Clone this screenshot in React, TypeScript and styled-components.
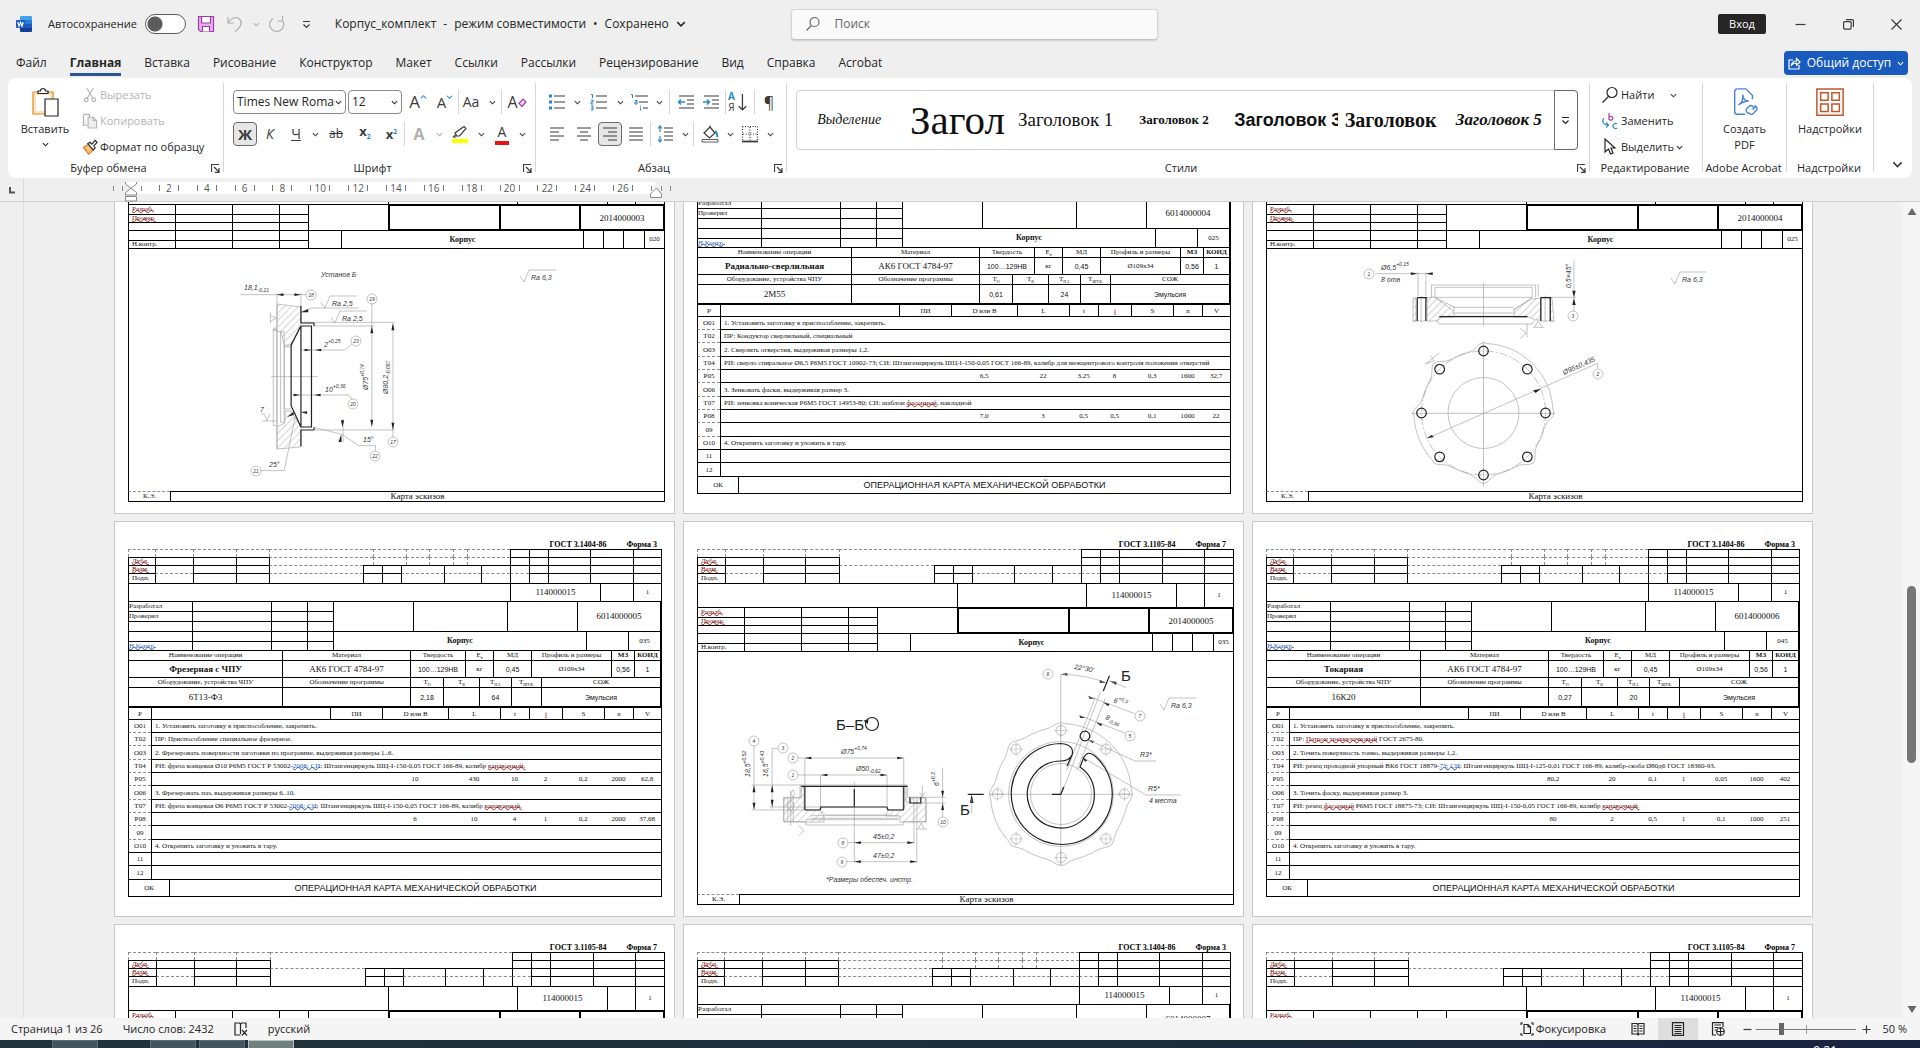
import React from 'react';
import styled, { createGlobalStyle, css } from 'styled-components';

const UI = `"Open Sans", "Noto Sans", sans-serif`;
const SERIF = `"Liberation Serif", "Times New Roman", serif`;
const SANS = `"Liberation Sans", Arial, sans-serif`;

const GlobalStyle = createGlobalStyle`
  * { box-sizing: border-box; }
  body { margin: 0; background: #efefef; }
  button, input, select { font: inherit; color: inherit; }
`;

const Shell = styled.div`
  display: flex;
  flex-direction: column;
  height: 100vh;
  overflow: hidden;
  background: #efefef;
  color: #262626;
  font: 11px/16px ${UI};
`;

/* ---------- title bar ---------- */

const TitleBar = styled.header`
  display: flex;
  align-items: center;
  justify-content: space-between;
  height: 48px;
  flex: none;
  padding-left: 16px;
`;
const TitleSide = styled.div`
  display: flex;
  align-items: center;
  flex: 1 1 0;
`;
const TitleEnd = styled(TitleSide)`
  justify-content: flex-end;
`;
const PlainButton = styled.button<{ $w?: number; $dim?: boolean; $on?: boolean }>`
  display: flex;
  align-items: center;
  justify-content: center;
  flex: none;
  width: ${p => (p.$w ? `${p.$w}px` : 'auto')};
  height: 24px;
  padding: 0;
  border: 1px solid ${p => (p.$on ? '#6b6b6b' : 'transparent')};
  border-radius: 4px;
  background: ${p => (p.$on ? '#e6e6e6' : 'transparent')};
  color: ${p => (p.$dim ? '#b0b0b0' : '#3b3b3b')};
  white-space: nowrap;
`;
const AutoSave = styled.label`
  display: flex;
  align-items: center;
  gap: 8px;
  margin-left: 16px;
  margin-right: 6px;
`;
const Toggle = styled.input`
  appearance: none;
  width: 41px;
  height: 20px;
  margin: 0;
  border: 1px solid #5c5c5c;
  border-radius: 10px;
  background: radial-gradient(circle at 9px 9px, #5c5c5c 7px, #fff 8px);
`;
const DocTitle = styled.button`
  display: flex;
  align-items: center;
  gap: 7px;
  margin-left: 13px;
  padding: 0;
  border: 0;
  background: none;
  font-size: 12px;
  white-space: nowrap;
`;
const SearchBox = styled.label`
  display: flex;
  align-items: center;
  gap: 12px;
  width: 367px;
  height: 31px;
  margin-left: 12px;
  padding-left: 13px;
  border: 1px solid #d6d6d6;
  border-bottom-color: #c2c2c2;
  border-radius: 4px;
  background: #fafafa;
  box-shadow: 0 1px 2px rgba(0, 0, 0, 0.14);
  color: #666;
`;
const SearchInput = styled.input`
  flex: 1;
  min-width: 0;
  border: 0;
  background: none;
  outline: 0;
  font-size: 12px;
  &::placeholder { color: #666; opacity: 1; }
`;
const SignIn = styled.button`
  width: 48px;
  height: 20px;
  margin-right: 10px;
  padding: 0;
  border: 0;
  border-radius: 2px;
  background: #262626;
  color: #fff;
`;

/* ---------- tabs ---------- */

const TabBar = styled.nav`
  display: flex;
  align-items: center;
  justify-content: space-between;
  height: 30px;
  flex: none;
  padding: 0 12px 0 16px;
  font-size: 12px;
`;
const TabList = styled.div`
  display: flex;
  gap: 23px;
`;
const Tab = styled.button<{ $active?: boolean }>`
  height: 26px;
  padding: 2px 0 0;
  border: 0;
  border-bottom: 3px solid ${p => (p.$active ? '#2b579a' : 'transparent')};
  background: none;
  font-weight: ${p => (p.$active ? 700 : 400)};
  line-height: 18px;
`;
const Share = styled.button`
  display: flex;
  align-items: center;
  justify-content: space-between;
  width: 124px;
  height: 24px;
  padding: 0 4px;
  border: 0;
  border-radius: 4px;
  background: #185abd;
  color: #fff;
  white-space: nowrap;
`;

/* ---------- ribbon ---------- */

const Ribbon = styled.section`
  display: flex;
  flex: none;
  height: 100px;
  margin: 0 8px;
  padding: 5px 0 6px;
  border-radius: 8px;
  background: #fff;
`;
const Group = styled.div<{ $w?: number }>`
  display: flex;
  flex-direction: column;
  justify-content: space-between;
  ${p => (p.$w ? css`width: ${p.$w}px; flex: none;` : css`flex: 1; min-width: 0;`)}
  border-right: 1px solid #d6d6d6;
`;
const GroupFoot = styled.div`
  display: flex;
  align-items: center;
  height: 16px;
  margin-bottom: -4px;
  padding-right: 2px;
`;
const GroupName = styled.span`
  flex: 1;
  text-align: center;
  white-space: nowrap;
`;
const Rows = styled.div`
  display: flex;
  flex-direction: column;
  gap: 8px;
  padding: 7px 0 0 9px;
`;
const ToolRow = styled.div`
  display: flex;
  align-items: center;
  height: 24px;
`;
const Rule = styled.span<{ $m?: number }>`
  width: 1px;
  height: 24px;
  margin: 0 ${p => p.$m ?? 0}px;
  background: #d6d6d6;
`;
const Picker = styled.span<{ $w: number }>`
  display: flex;
  align-items: center;
  width: ${p => p.$w}px;
  height: 24px;
  margin-right: 2px;
  padding: 0 3px;
  border: 1px solid #8a8a8a;
  border-radius: 4px;
  select {
    flex: 1;
    min-width: 0;
    padding: 0;
    border: 0;
    appearance: none;
    background: none;
    font-size: 12px;
  }
`;
const Glyph = styled.span<{ $size?: number; $bold?: boolean; $italic?: boolean; $line?: string; $bar?: string }>`
  font-size: ${p => p.$size ?? 15}px;
  line-height: 18px;
  font-weight: ${p => (p.$bold ? 700 : 400)};
  font-style: ${p => (p.$italic ? 'italic' : 'normal')};
  text-decoration: ${p => p.$line ?? 'none'};
  border-bottom: ${p => (p.$bar ? `4px solid ${p.$bar}` : '0')};
  padding: 0 ${p => (p.$bar ? 3 : 0)}px;
  small { font-size: 8px; color: #2b88c8; }
`;
const Clip = styled.div`
  display: flex;
`;
const Stack = styled.div`
  display: flex;
  flex-direction: column;
  align-items: flex-start;
  gap: 2px;
`;
const BigButton = styled.button<{ $w: number }>`
  display: flex;
  flex-direction: column;
  align-items: center;
  gap: 4px;
  width: ${p => p.$w}px;
  padding: 4px 0 0;
  border: 0;
  background: none;
`;
const LineButton = styled.button<{ $dim?: boolean }>`
  display: flex;
  align-items: center;
  gap: 2px;
  height: 24px;
  padding: 0;
  border: 0;
  background: none;
  white-space: nowrap;
  color: ${p => (p.$dim ? '#b5b5b5' : '#262626')};
`;
const Gallery = styled.div`
  display: flex;
  height: 60px;
  margin: 7px 11px 0 9px;
  border: 1px solid #d0d0d0;
  border-radius: 4px;
`;
const StyleItem = styled.button<{ $size: number; $sans?: boolean; $bold?: boolean; $italic?: boolean }>`
  flex: 1 1 0;
  min-width: 0;
  padding: 0 8px 0 4px;
  border: 0;
  background: none;
  overflow: hidden;
  color: #111;
  font-family: ${p => (p.$sans ? SANS : SERIF)};
  font-size: ${p => p.$size}px;
  font-weight: ${p => (p.$bold ? 700 : 400)};
  font-style: ${p => (p.$italic ? 'italic' : 'normal')};
  white-space: nowrap;
`;
const GalleryMore = styled.button`
  display: flex;
  align-items: center;
  justify-content: center;
  width: 24px;
  margin: -1px;
  padding: 0;
  border: 1px solid #6b6b6b;
  border-radius: 0 4px 4px 0;
  background: #fff;
`;
const CollapseSlot = styled.div`
  display: flex;
  align-items: flex-end;
  justify-content: center;
  width: 38px;
  padding-left: 8px;
  margin-bottom: -4px;
`;
const SortText = styled.span`
  display: flex;
  flex-direction: column;
  font-size: 10px;
  line-height: 11px;
  b { color: #2b88c8; }
`;
const EditList = styled(Stack)`
  padding-left: 11px;
`;

/* ---------- ruler ---------- */

const RulerBar = styled.div`
  display: flex;
  flex: none;
  height: 24px;
  border-bottom: 1px solid #d0d0d0;
`;
const TabStop = styled.div`
  display: flex;
  align-items: center;
  justify-content: center;
  width: 24px;
  border-right: 1px solid #dcdcdc;
`;
const Ruler = styled.div`
  display: flex;
  align-items: flex-start;
  padding: 4px 0 0 88px;
  font-size: 10px;
  line-height: 12px;
  color: #555;
`;
const RulerScale = styled.div`
  display: flex;
  justify-content: space-around;
  width: 492px;
  height: 12px;
  background: #fff;
`;
const RulerMark = styled.span`
  display: flex;
  align-items: center;
  justify-content: space-between;
  width: 20px;
  &::before, &::after { content: ''; width: 1px; height: 6px; background: #777; }
`;
const RulerEnd = styled.div<{ $w: number }>`
  display: flex;
  width: ${p => p.$w}px;
  height: 20px;
`;

/* ---------- document ---------- */

const Workspace = styled.main`
  display: flex;
  flex: 1;
  min-height: 0;
`;
const VRuler = styled.div`
  width: 24px;
  border-right: 1px solid #e0e0e0;
`;
const Canvas = styled.div`
  flex: 1;
  display: grid;
  grid-template-columns: repeat(3, 561px);
  grid-template-rows: 312px 396px minmax(0, 1fr);
  column-gap: 8px;
  row-gap: 7px;
  justify-content: center;
  overflow: hidden;
`;
type Edge = 'top' | 'bottom';
const Sheet = styled.article<{ $cut?: Edge; $foot?: number }>`
  display: flex;
  flex-direction: column;
  align-items: flex-start;
  justify-content: ${p => (p.$cut === 'top' ? 'flex-end' : 'flex-start')};
  padding: ${p => (p.$cut === 'top' ? 0 : 17)}px 0 ${p => (p.$cut === 'top' ? p.$foot : 0)}px 13px;
  border: 1px solid #c8c8c8;
  border-top-width: ${p => (p.$cut === 'top' ? 0 : 1)}px;
  border-bottom-width: ${p => (p.$cut === 'bottom' ? 0 : 1)}px;
  background: #fff;
  overflow: hidden;
  color: #111;
  font: 7px/8px ${SERIF};
`;
const Form = styled.div<{ $w: number }>`
  display: flex;
  flex-direction: column;
  flex: none;
  width: ${p => p.$w}px;
`;
const Caption = styled.div<{ $pad: number }>`
  display: flex;
  justify-content: flex-end;
  gap: 20px;
  height: 10px;
  padding-right: ${p => p.$pad}px;
  font-weight: 700;
  font-size: 8px;
  line-height: 12px;
  color: #000;
`;
const Strip = styled.div<{ $h: number; $end?: boolean }>`
  display: flex;
  flex: none;
  height: ${p => p.$h}px;
  border-right: 1px solid #000;
  border-right-width: ${p => (p.$end === false ? 0 : 1)}px;
`;
const edge = (k: string) => (k === 's' ? '1px solid #000' : k === 'd' ? '1px dashed #8c8c8c' : '0');
const Box = styled.div<{ $w?: number; $e: string; $left?: number; $size: number; $bold?: boolean; $sans?: boolean }>`
  display: flex;
  align-items: center;
  justify-content: ${p => (p.$left === undefined ? 'center' : 'flex-start')};
  ${p => (p.$w ? css`width: ${p.$w}px; flex: none;` : css`flex: 1; min-width: 0;`)}
  padding-left: ${p => p.$left ?? 0}px;
  border-top: ${p => edge(p.$e[0])};
  border-left: ${p => edge(p.$e[1])};
  font-family: ${p => (p.$sans ? SANS : SERIF)};
  font-size: ${p => p.$size}px;
  line-height: ${p => p.$size}px;
  font-weight: ${p => (p.$bold ? 700 : 400)};
  white-space: nowrap;
  sub { font-size: 4px; line-height: 4px; align-self: flex-end; }
`;
const HeavyBox = styled.div<{ $w?: number; $last?: boolean }>`
  display: flex;
  align-items: center;
  justify-content: center;
  ${p => (p.$w ? css`width: ${p.$w}px; flex: none;` : css`flex: 1;`)}
  margin-bottom: -1px;
  border: 2px solid #000;
  border-right-width: ${p => (p.$last ? 2 : 0)}px;
  font-size: 9px;
`;
const Halves = styled.div`
  display: flex;
  flex: none;
`;
const Column = styled.div<{ $w?: number }>`
  display: flex;
  flex-direction: column;
  ${p => (p.$w ? css`width: ${p.$w}px; flex: none;` : css`flex: 1; min-width: 0;`)}
`;
const HeavyFrame = styled.div`
  border-right: 1px solid #000;
  border-bottom: 1px solid #000;
`;
const Flag = styled.span<{ $c?: string }>`
  text-decoration: underline wavy ${p => p.$c ?? '#d21a1a'} 1px;
  text-decoration-skip-ink: none;
  text-underline-offset: -2px;
  color: ${p => p.$c ?? '#5c1414'};
`;
const OpsTable = styled.table`
  width: 534px;
  table-layout: fixed;
  border-collapse: separate;
  border-spacing: 0;
  border-right: 1px solid #000;
  th, td {
    height: 13px;
    padding: 0;
    border-top: 1px solid #000;
    font-weight: 400;
    font-size: 7px;
    line-height: 8px;
    text-align: center;
    white-space: nowrap;
  }
  thead th { height: 12px; border-left: 1px solid #000; }
  tbody th { border-left: 1px solid #000; }
`;
const OpRow = styled.tr<{ $tall?: boolean; $dash?: boolean }>`
  th, td { height: ${p => (p.$tall ? 14 : 13)}px; }
  tbody & th { border-top: ${p => (p.$dash ? '1px dashed #8c8c8c' : '1px solid #000')}; }
  td:nth-child(2) { border-left: 1px solid #000; }
`;
const Step = styled.td`
  && { padding-left: 3px; text-align: left; }
`;
const DrawingArea = styled.div`
  height: 243px;
  border: 1px solid #000;
  border-bottom: 0;
`;
const Bottom = styled.div`
  display: flex;
  border-right: 1px solid #000;
  border-bottom: 1px solid #000;
`;

type Spec = { w?: number; e?: string; t?: React.ReactNode; left?: number; size?: number; bold?: boolean; sans?: boolean };
function Line({ h, cells, end }: { h: number; cells: Spec[]; end?: boolean }) {
  return (
    <Strip $h={h} $end={end}>
      {cells.map((c, i) => (
        <Box key={i} $w={c.w} $e={c.e ?? 'ss'} $left={c.left} $size={c.size ?? 7} $bold={c.bold} $sans={c.sans}>
          {c.t}
        </Box>
      ))}
    </Strip>
  );
}
const run = (e: string, ...ws: number[]): Spec[] => ws.map(w => (w ? { w, e } : { e }));

function OpHead() {
  return (
    <>
      <Line h={8} cells={[...run('dd', 27, 38, 43, 33, 104, 33, 23, 24, 14, 43), ...run('ss', 19, 19, 42, 43, 0)]} />
      <Line h={8} cells={[{ w: 27, t: <Flag>Дубл.</Flag>, left: 3 }, ...run('ss', 38, 43, 33), { w: 104, e: 'ds' }, ...run('dd', 33, 23, 24, 14, 43), ...run('ss', 19, 19, 42, 43, 0)]} />
      <Line h={8} cells={[{ w: 27, t: <Flag>Взам.</Flag>, left: 3 }, ...run('ss', 38, 43, 33), { w: 94, e: 'ds' }, ...run('ss', 19, 19, 43, 37, 29, 19, 19, 42, 43, 0)]} />
      <Line h={10} cells={[{ w: 27, t: 'Подп.', left: 3 }, { w: 38, e: 'ds' }, ...run('ss', 43, 33), { w: 94, e: 'ds' }, ...run('ss', 19, 19), ...run('ds', 43, 37, 29, 19), ...run('ss', 19, 42, 43, 0)]} />
      <Line h={18} cells={[{ w: 382 }, { w: 90, t: '114000015', size: 9 }, { w: 33 }, { t: '1' }]} />
    </>
  );
}
function SketchHead() {
  return (
    <>
      <Line h={8} cells={[...run('dd', 28, 38, 42, 34), { w: 242, e: 'dd' }, ...run('ss', 19, 19, 43, 42, 0)]} />
      <Line h={8} cells={[{ w: 28, t: <Flag>Дубл.</Flag>, left: 3 }, ...run('ss', 38, 42, 34), { w: 242, e: 'ns' }, ...run('ss', 19, 19, 43, 42, 0)]} />
      <Line h={8} cells={[{ w: 28, t: <Flag>Взам.</Flag>, left: 3 }, ...run('ss', 38, 42, 34), { w: 95, e: 'ds' }, ...run('ss', 19, 19, 42, 38, 29, 19, 19, 43, 42, 0)]} />
      <Line h={10} cells={[{ w: 28, t: 'Подп.', left: 3 }, { w: 38, e: 'ds' }, ...run('ss', 42, 34), { w: 95, e: 'ns' }, ...run('ss', 19, 19), ...run('ds', 42, 38, 29, 19), ...run('ss', 19, 43, 42, 0)]} />
    </>
  );
}

type Op = {
  no: string; page?: string; name?: string; machine?: string; t0?: string; tp?: string;
  steps?: React.ReactNode[]; m1?: string[]; m2?: string[]; cut?: Edge;
};
const rowIds = ['О01', 'Т02', 'О03', 'Т04', 'Р05', 'О06', 'Т07', 'Р08', '09', 'О10', '11', '12'];
const widths = [23, 179, 52, 66, 52, 29, 33, 42, 29, 28];

function OperationCard({ no, page, name, machine, t0, tp, steps = [], m1 = [], m2 = [], cut }: Op) {
  const full = cut !== 'bottom';
  return (
    <Sheet $cut={cut} $foot={19}>
      <Form $w={534}>
        {cut !== 'top' && <><Caption $pad={5}><span>ГОСТ 3.1404-86</span><span>Форма 3</span></Caption><OpHead /></>}
        <HeavyFrame>
          <Halves>
            <Column $w={205}>
              {['Разработал', full && 'Проверил', '', '', full && <Flag $c="#2a5fb4" key="n">Н.Контр.</Flag>].map((t, i) => (
                <Line key={i} h={i === 4 ? 9 : 10} end={false} cells={[{ w: 64, t, left: 0 }, { w: 79 }, { w: 36 }, { w: 26 }]} />
              ))}
            </Column>
            <Column>
              <Line h={30} cells={[{ w: 80 }, { w: 94 }, { w: 70 }, { t: no, size: 9 }]} />
              <Line h={19} cells={[{ w: 253, t: full && 'Корпус', size: 8, bold: true }, { w: 42 }, { t: page }]} />
            </Column>
          </Halves>
          {full && (
            <>
              <Line h={10} cells={[{ w: 154, t: 'Наименование операции' }, { w: 128, t: 'Материал' }, { w: 55, t: 'Твердость' }, { w: 28, t: <>Е<sub>в</sub></> }, { w: 38, t: 'МД' }, { w: 80, t: 'Профиль и размеры' }, { w: 23, t: 'МЗ', bold: true }, { t: 'КОИД', bold: true }]} />
              <Line h={17} cells={[{ w: 154, t: name, size: 9, bold: true }, { w: 128, t: 'АК6 ГОСТ 4784-97', size: 9 }, { w: 55, t: '100…129НВ', sans: true }, { w: 28, t: 'кг' }, { w: 38, t: '0,45', sans: true }, { w: 80, t: 'Ø109x34' }, { w: 23, t: '0,56', sans: true }, { t: '1', sans: true }]} />
              <Line h={10} cells={[{ w: 154, t: 'Оборудование, устройства ЧПУ' }, { w: 128, t: 'Обозначение программы' }, { w: 33, t: <>Т<sub>О</sub></> }, { w: 36, t: <>Т<sub>В</sub></> }, { w: 32, t: <>Т<sub>П.З.</sub></> }, { w: 30, t: <>Т<sub>ШТ.К.</sub></> }, { t: 'СОЖ' }]} />
              <Line h={19} cells={[{ w: 154, t: machine, size: 9 }, { w: 128 }, { w: 33, t: t0, sans: true }, { w: 36 }, { w: 32, t: tp, sans: true }, { w: 30 }, { t: 'Эмульсия', sans: true }]} />
            </>
          )}
        </HeavyFrame>
        {full && (
          <>
            <OpsTable>
              <colgroup>{widths.map((w, i) => <col key={i} width={w} />)}</colgroup>
              <thead>
                <tr>
                  {['Р', '', 'ПИ', 'D или В', 'L', 't', 'i', 'S', 'n', 'V'].map((t, i) => (
                    <th key={i} scope="col">{t === 'i' ? <Flag>i</Flag> : t}</th>
                  ))}
                </tr>
              </thead>
              <tbody>
                {rowIds.map((id, i) => {
                  const m = id === 'Р05' ? m1 : id === 'Р08' ? m2 : null;
                  return (
                    <OpRow key={id} $tall={i % 3 === 2} $dash={i > 0 && i < 10}>
                      <th scope="row">{id}</th>
                      {m ? <><td colSpan={2} />{m.map((v, k) => <td key={k}>{v}</td>)}</> : <Step colSpan={9}>{steps[i]}</Step>}
                    </OpRow>
                  );
                })}
              </tbody>
            </OpsTable>
            <Bottom>
              <Line h={17} end={false} cells={[{ w: 41, t: 'ОК' }, { w: 492, t: 'ОПЕРАЦИОННАЯ КАРТА МЕХАНИЧЕСКОЙ ОБРАБОТКИ', size: 9, sans: true }]} />
            </Bottom>
          </>
        )}
      </Form>
    </Sheet>
  );
}

function SketchCard({ no, page, cut, children }: { no?: string; page?: string; cut?: Edge; children?: React.ReactNode }) {
  const full = cut !== 'bottom';
  return (
    <Sheet $cut={cut} $foot={11}>
      <Form $w={537}>
        {cut !== 'top' && <><Caption $pad={8}><span>ГОСТ 3.1105-84</span><span>Форма 7</span></Caption><SketchHead /></>}
        <Line h={24} cells={[{ w: 260 }, { w: 129 }, { w: 90, t: cut !== 'top' && '114000015', size: 9 }, { w: 28 }, { t: cut !== 'top' && '1' }]} />
        <Halves>
          <Column $w={180}>
            {[<Flag key="a">Разраб.</Flag>, full && <Flag key="b">Провер.</Flag>, '', '', full && 'Н.контр.'].map((t, i) => (
              <Line key={i} h={[10, 8, 8, 10, 8][i]} end={false} cells={[{ w: 47, t, left: 3 }, { w: 57 }, { w: 47 }, { w: 29 }]} />
            ))}
          </Column>
          <Column>
            <Strip $h={26} $end={false}>
              <Box $w={80} $e="ss" $size={7} />
              <HeavyBox $w={111} />
              <HeavyBox $w={80} />
              <HeavyBox $last>{no}</HeavyBox>
            </Strip>
            <Line h={18} cells={[{ w: 33 }, { w: 242, t: full && 'Корпус', size: 8, bold: true }, { w: 20 }, { w: 20 }, { w: 21 }, { t: page }]} />
          </Column>
        </Halves>
        {full && (
          <>
            <DrawingArea>{children}</DrawingArea>
            <Bottom>
              <Line h={10} end={false} cells={[{ w: 42, t: 'К.Э.', e: 'ds' }, { w: 494, t: 'Карта эскизов', size: 9 }]} />
            </Bottom>
          </>
        )}
      </Form>
    </Sheet>
  );
}

/* ---------- engineering drawings ---------- */

const Drawing = styled.svg`
  display: block;
  width: 100%;
  height: 100%;
  fill: none;
  stroke: #9a9a9a;
  stroke-width: 0.6;
  text { fill: #333; stroke: none; font: italic 7px ${SANS}; }
  .s { font-size: 5px; }
  .v { font: 15px ${SANS}; fill: #222; }
  .k { stroke: #222; stroke-width: 1.2; }
  .f { fill: #222; stroke: none; }
  path, line { vector-effect: non-scaling-stroke; }
`;
function Ball({ x, y, n }: { x: number; y: number; n: string }) {
  return (
    <g>
      <circle cx={x} cy={y} r="5" />
      <text x={x} y={y + 2} textAnchor="middle" className="s">{n}</text>
    </g>
  );
}
function Note({ x, y, a = 0, t, up, dn }: { x: number; y: number; a?: number; t: string; up?: string; dn?: string }) {
  return (
    <text transform={`translate(${x} ${y}) rotate(${a})`}>
      {t}
      {up && <tspan className="s" dy="-4">{up}</tspan>}
      {dn && <tspan className="s" dy="2">{dn}</tspan>}
    </text>
  );
}
function Rough({ x, y, t }: { x: number; y: number; t: string }) {
  return (
    <g>
      <path d={`M${x - 11} ${y - 4}l4 6l5 -12h27`} />
      <Note x={x} y={y} t={t} />
    </g>
  );
}
function flange(cx: number, cy: number, r: number, bump: number) {
  const pts: string[] = [];
  for (let a = 0; a < 360; a += 3) {
    const d = Math.abs(((a + 22.5) % 45) - 22.5);
    const wide = a > 270 || (a > 135 && a < 180);
    const rr = wide ? bump - 1 : r + (bump - r) * Math.exp(-((d / 7) ** 2));
    const t = (a * Math.PI) / 180;
    pts.push(`${(cx + rr * Math.cos(t)).toFixed(1)} ${(cy + rr * Math.sin(t)).toFixed(1)}`);
  }
  return `M${pts.join('L')}Z`;
}
const holes = (cx: number, cy: number, r: number) =>
  Array.from({ length: 8 }, (_, i) => [cx + r * Math.cos((i * Math.PI) / 4), cy + r * Math.sin((i * Math.PI) / 4)]);

function Hatch({ id }: { id: string }) {
  return (
    <defs>
      <pattern id={id} width="5" height="5" patternUnits="userSpaceOnUse" patternTransform="rotate(45)">
        <path d="M0 0V5" strokeWidth="0.8" />
      </pattern>
    </defs>
  );
}

function SketchBore() {
  return (
    <Drawing aria-label="Эскиз 020">
      <Hatch id="h1" />
      <path fill="url(#h1)" d="M148 55L172 58V74L162 98V98H156L152 83L144 81L148 77ZM148 178L156 174V162H162L172 178V198L148 200Z" />
      <g transform="scale(.3635 .3333) translate(-51 -160)">
        <path d="M357 297H538M458 292V760M524 292V330M524 380H782M560 391H725M719 322V690M777 385V726M560 703H782M524 463H645L664 446M500 598H655L665 612M448 400V690H458V400ZM468 408V680H478V408ZM478 448H497M478 448V640H497M442 543H570M560 695L636 716L683 750H729V766M640 670V740M412 825H478L508 665M440 350V384M440 360L457 368L440 376M415 655H424L430 676L438 655M418 676H458M524 350L555 337H683" />
        <path className="k" d="M524 330V382H560M524 391H553V694H524M560 703H524V752M524 391L497 448V630L524 694M524 391V694M560 382V391M560 695V703" />
        <path className="f" d="M458 297l18 -4v8zM524 297l-18 -4v8zM719 391l-4 22h8zM719 694l-4 -22h8zM777 382l-4 22h8zM777 703l-4 -22h8zM552 463l-18 -4v8zM562 463l18 -4v8zM522 598l-18 -4v8zM560 598l18 -4v8zM524 350l20 -10v10zM638 694l-4 -20h9zM635 716l-8 24l9 -2zM486 664l18 -16v10zM523 649l18 -2v8z" />
      </g>
      <Note x={192} y={28} t="Установ Б" />
      <Note x={115} y={41} t="18,1" dn="-0,21" />
      <Rough x={203} y={57} t="Ra 2,5" />
      <Rough x={213} y={72} t="Ra 2,5" />
      <Rough x={402} y={31} t="Ra 6,3" />
      <Note x={195} y={98} t="2" up="+0,25" />
      <Note x={196} y={143} t="10" up="+0,36" />
      <Note x={239} y={141} a={-90} t="Ø75" up="+0,74" />
      <Note x={259} y={145} a={-90} t="Ø80,2" dn="-0,087" />
      <Note x={234} y={193} t="15°" />
      <Note x={140} y={218} t="25°" />
      <Note x={131} y={163} t="7" />
      <Ball x={182} y={46} n="18" />
      <Ball x={243} y={50} n="19" />
      <Ball x={227} y={92} n="23" />
      <Ball x={224} y={155} n="20" />
      <Ball x={264} y={193} n="17" />
      <Ball x={246} y={207} n="22" />
      <Ball x={127} y={222} n="21" />
    </Drawing>
  );
}

function SketchHoles() {
  return (
    <Drawing aria-label="Эскиз 025">
      <Hatch id="h2" />
      <path fill="url(#h2)" d="M167 48L187 58V68H175L170 72H160V49ZM265 50L247 60V68H262L268 71H274V49ZM149 49H146V72H149ZM283 49H285L287 72H283Z" />
      <g transform="scale(.4305 .3333) translate(-50 -160)">
        <path d="M302 234H432M401 230V300M419 230V300M432 305V268H674V305M440 305V275H666V305H440L482 345M666 305L622 345M482 335H622M482 352H622M445 375H445L450 385H666L670 375M450 362H655M553 262V392M763 195V346M684 305H768M680 265V300M408 300V380M696 300V380M654 385V425M638 398L652 412L638 430M668 395H694M672 393L680 377L688 393M388 376H420M686 376H718M553 438V872M385 653H720M422 728L818 503V518M418 505L450 472M418 505L438 495L430 480" />
        <path className="k" d="M399 306V376M419 306V376M399 306H422M686 306V376M708 306V376M686 306H710M450 363H655" />
        <path className="f" d="M400 234l-16 -4v8zM419 234l16 -4v8zM763 305l-4 -20h8zM763 308l-4 20h8zM422 728l10 -10l6 6zM686 580l-18 4l6 8z" />
      </g>
      <path d={flange(216.5, 164, 62.5, 70.5)} />
      <circle cx="216.5" cy="164" r="62" strokeDasharray="8 2 2 2" />
      <circle cx="216.5" cy="164" r="35.5" />
      {holes(216.5, 164, 62).map(([x, y], i) => <circle key={i} cx={x} cy={y} r="4.8" className="k" strokeWidth="1.8" />)}
      <Note x={114} y={21} t="Ø6,5" up="+0,15" />
      <Note x={114} y={33} t="8 отв" />
      <Note x={304} y={39} a={-90} t="0,5×45°" />
      <Rough x={415} y={33} t="Ra 6,3" />
      <Note x={297} y={126} a={-24} t="Ø95±0,435" />
      <Ball x={102} y={25} n="1" />
      <Ball x={306} y={67} n="3" />
      <Ball x={331} y={125} n="2" />
    </Drawing>
  );
}

function SketchSlot() {
  const cx = 363, cy = 142;
  return (
    <Drawing aria-label="Эскиз 035">
      <Hatch id="h3" />
      <path fill="url(#h3)" d="M86 146H102V134H106V158H122L126 164V170H86ZM208 134H205V158H190L188 164H202V170H228V146H212V150H208Z" />
      <g transform="scale(.3635 .3333) translate(-48 -409)">
        <path d="M202 690V880M252 880V698H266M324 727H614M324 778H568M342 727V810M614 727V810M385 778V872M568 778V872M195 808H624V845H675V918H612V928H345V918H283V845H332V808M195 883H342M245 874H478M358 900H600M358 908H600M385 883L400 898H568M721 756V904M630 845H728M630 862H728M462 981H642M456 1038H650M642 845V985M650 845V1042M478 800V1042M325 960L340 945L325 930M648 940H678M655 938L662 922L670 938M295 845V918M310 845V918M303 825V930M303 852L293 870L303 890L313 870ZM345 912H600M665 810V842M658 830L665 843L672 830M309 823L303 833L309 845L315 833Z" />
        <path className="k" d="M342 812V880Q342 883 346 883H380Q386 883 386 874H568Q568 883 574 883H610Q614 883 614 880V812M332 812H624M631 845V862H661V845M478 820V872" strokeWidth="1" />
        <path className="f" d="M342 727l18 -4v8zM614 727l-18 -4v8zM386 778l18 -4v8zM568 778l-18 -4v8zM202 808l-4 22h8zM202 883l-4 -22h8zM252 808l-4 22h8zM252 874l-4 -22h8zM478 981l18 -4v8zM642 981l-18 -4v8zM478 1038l18 -4v8zM650 1038l-18 -4v8zM721 845l-4 -20h8zM721 863l-4 20h8zM503 615l12 10l2 -14zM1046 476l18 -4v8zM1170 501l-18 0l3 -8zM1180 495l20 4l-2 9zM1140 549l-18 -8l3 8zM1162 560l18 4l-3 8zM1115 607l-18 -8l3 8zM1142 620l18 4l-3 8zM1121 672l16 4l-3 7zM1105 724l14 10l-6 4zM801 836l-5 26h10z" />
        <path d="M1046 476V1050M850 836H1245M1046 476Q1110 476 1170 501M1180 495L1226 516M1120 541L1250 594M1097 599L1224 653M1121 672L1250 736H1308M1105 724L1280 838H1376M1155 530L1050 830M1141 545L1062 765M1168 550L1090 765M801 850V894" />
        <path className="k" d="M1180 480L1163 526M790 836H834M1022 836H1046L1054 814" strokeWidth="1.8" />
      </g>
      <path d={flange(cx, cy, 66.5, 71.5)} />
      <circle cx={cx} cy={cy} r="52.5" />
      <circle cx={cx} cy={cy} r="30.5" />
      <path className="k" d="M397 104A50.500 50.500 0 1 1 363 91.500Q377 93 374 103Q371 109 363 109A33.500 33.500 0 1 0 382 115L386 105Q390 98 397 104M374 103L369 114" />
      <circle cx="387" cy="84" r="4.800" className="k" />
      {holes(cx, cy, 63.5).map(([x, y], i) => (
        <g key={i}>
          <circle cx={x} cy={y} r="5" />
          <path d={`M${x - 7} ${y}h14M${x} ${y - 7}v14`} strokeWidth="0.4" />
        </g>
      ))}
      <circle cx="174" cy="72" r="6.500" className="k" />
      <text x="138" y="78" className="v">Б–Б</text>
      <text x="423" y="29" className="v">Б</text>
      <text x="262" y="163" className="v">Б</text>
      <Note x={143} y={102} t="Ø75" up="+0,74" />
      <Note x={158} y={119} t="Ø50" dn="-0,62" />
      <Note x={52} y={125} a={-90} t="18,5" up="+0,52" />
      <Note x={70} y={125} a={-90} t="16,5" up="+0,43" />
      <Note x={241} y={134} a={-90} t="6" up="+0,3" />
      <Note x={175} y={187} t="45±0,2" />
      <Note x={175} y={206} t="47±0,2" />
      <Note x={128} y={230} t="*Размеры обеспеч. инстр." />
      <Note x={376} y={17} a={10} t="22°30'" />
      <Note x={415} y={50} a={22} t="6" up="+0,3" />
      <Note x={407} y={67} a={22} t="8" dn="-0,36" />
      <Rough x={473} y={56} t="Ra 6,3" />
      <Note x={442} y={105} t="R3*" />
      <Note x={450} y={139} t="R5*" />
      <Note x={451} y={151} t="4 места" />
      <Ball x={56} y={89} n="4" />
      <Ball x={85} y={96} n="3" />
      <Ball x={95} y={106} n="2" />
      <Ball x={95} y={123} n="1" />
      <Ball x={245} y={170} n="10" />
      <Ball x={145} y={191} n="8" />
      <Ball x={144} y={210} n="9" />
      <Ball x={350} y={22} n="6" />
      <Ball x={442} y={64} n="7" />
      <Ball x={432} y={84} n="5" />
    </Drawing>
  );
}

/* ---------- scroll bar, status bar, taskbar ---------- */

const ScrollBar = styled.div`
  display: flex;
  flex-direction: column;
  align-items: center;
  width: 17px;
  padding: 5px 0 4px;
  background: #f5f5f5;
`;
const ScrollTrack = styled.div`
  flex: 1;
  display: grid;
  grid-template-rows: 365fr 175fr 238fr;
`;
const ScrollThumb = styled.div`
  grid-row: 2;
  width: 9px;
  border-radius: 5px;
  background: #767676;
`;
const StatusBar = styled.footer`
  display: flex;
  align-items: center;
  justify-content: space-between;
  flex: none;
  height: 22px;
  padding: 0 13px 0 11px;
  background: #f5f5f5;
`;
const StatusSide = styled.div<{ $gap: number }>`
  display: flex;
  align-items: center;
  gap: ${p => p.$gap}px;
`;
const ViewButton = styled.button<{ $on?: boolean }>`
  display: flex;
  align-items: center;
  justify-content: center;
  width: 40px;
  height: 22px;
  padding: 0;
  border: 0;
  background: ${p => (p.$on ? '#dedede' : 'none')};
`;
const Focus = styled.button`
  display: flex;
  align-items: center;
  gap: 2px;
  margin-right: 12px;
  padding: 0;
  border: 0;
  background: none;
`;
const Zoom = styled.input`
  width: 100px;
  height: 16px;
  margin: 0;
  appearance: none;
  background: linear-gradient(#777, #777) 0 8px / 100% 1px no-repeat, linear-gradient(#999, #999) 50px 4px / 1px 9px no-repeat;
  &::-webkit-slider-thumb {
    appearance: none;
    width: 5px;
    height: 12px;
    background: #666;
  }
`;
const ZoomValue = styled.span`
  width: 31px;
  text-align: right;
  white-space: nowrap;
`;
const TaskBar = styled.div`
  display: flex;
  justify-content: space-between;
  flex: none;
  height: 8px;
  padding: 0 83px 0 52px;
  overflow: hidden;
  background: linear-gradient(90deg, #22333b, #1c2c3a 60%, #1a2342);
`;
const TaskGroup = styled.div`
  display: flex;
  gap: 3px;
`;
const Task = styled.span<{ $on?: boolean; $gap?: boolean }>`
  width: 46px;
  height: 8px;
  margin-right: ${p => (p.$gap ? 49 : 0)}px;
  border: 1px solid ${p => (p.$on ? '#b9c2c2' : '#5d6d74')};
  border-bottom: 0;
  background: ${p => (p.$on ? '#71807f' : '#43545c')};
`;
const Clock = styled.time`
  padding-top: 3px;
  color: #fff;
  font-size: 12px;
  line-height: 16px;
`;

/* ---------- icons ---------- */

const Ico = styled.svg<{ $s?: number; $raised?: boolean }>`
  width: ${p => p.$s ?? 18}px;
  height: ${p => p.$s ?? 18}px;
  margin-bottom: ${p => (p.$raised ? 10 : 0)}px;
  flex: none;
  fill: none;
  stroke: currentColor;
  stroke-width: 1.2;
  .b { stroke: #2b88c8; }
`;
const Chev = ({ s = 7 }: { s?: number }) => <Ico $s={s} viewBox="0 0 8 8"><path d="M1 2.500L4 5.500L7 2.500" /></Ico>;
const Launcher = () => (
  <PlainButton $w={12} aria-label="Параметры группы">
    <Ico $s={9} viewBox="0 0 9 9"><path d="M.5 8V.5H8M3 3L8 8M8 4V8.300H4" /></Ico>
  </PlainButton>
);
const Drop = ({ w, dim }: { w: number; dim?: boolean }) => <PlainButton $w={w} $dim={dim} aria-label="Ещё"><Chev /></PlainButton>;
function Lines({ xs }: { xs: [number, number][] }) {
  return <Ico viewBox="0 0 18 18"><path d={xs.map(([a, b], i) => `M${a} ${3 + i * 4}H${b}`).join('')} /></Ico>;
}

const tabs = ['Файл', 'Главная', 'Вставка', 'Рисование', 'Конструктор', 'Макет', 'Ссылки', 'Рассылки', 'Рецензирование', 'Вид', 'Справка', 'Acrobat'];

function Header() {
  return (
    <>
      <TitleBar>
        <TitleSide>
          <Ico $s={16} viewBox="0 0 16 16">
            <path fill="#41a5ee" stroke="none" d="M5 0h10a1 1 0 0 1 1 1v3H4V1a1 1 0 0 1 1-1z" />
            <path fill="#2b7cd3" stroke="none" d="M4 4h12v4H4z" />
            <path fill="#185abd" stroke="none" d="M4 8h12v4H4z" />
            <path fill="#103f91" stroke="none" d="M4 12h12v3a1 1 0 0 1-1 1H5a1 1 0 0 1-1-1z" />
            <rect fill="#185abd" stroke="none" y="4" width="9" height="8" rx="1" />
            <path stroke="#fff" d="M1.800 6L3 10.200L4.500 6.200L6 10.200L7.200 6" />
          </Ico>
          <AutoSave>Автосохранение<Toggle type="checkbox" /></AutoSave>
          <PlainButton $w={28} aria-label="Сохранить">
            <Ico viewBox="0 0 18 18"><path fill="#e3b3e8" stroke="#a33bb0" d="M1.500 1.500H16.500V16.500H3.500L1.500 14.500Z" /><path fill="#fff" stroke="#a33bb0" d="M4.500 1.500H13.500V8H4.500ZM5.500 16.500V11.500H12.500V16.500" /></Ico>
          </PlainButton>
          <PlainButton $w={30} $dim aria-label="Отменить"><Ico viewBox="0 0 18 18"><path d="M2 2V8H8M2 8C5 3 10 1 13.500 4C17 8 15 12 9 16.500" /></Ico></PlainButton>
          <Drop w={14} dim />
          <PlainButton $w={28} $dim aria-label="Повторить"><Ico viewBox="0 0 18 18"><path d="M13.500 1V6H8.500M4 3.500A7 7 0 1 0 13.500 5.500" /></Ico></PlainButton>
          <PlainButton $w={30} aria-label="Настройка панели"><Ico $s={9} viewBox="0 0 9 9"><path d="M1 1.500H8M1.500 4.500L4.500 7.500L7.500 4.500" /></Ico></PlainButton>
          <DocTitle><span>Корпус_комплект</span><span>-</span><span>режим совместимости</span><span>•</span><span>Сохранено</span><Chev s={10} /></DocTitle>
        </TitleSide>
        <SearchBox>
          <Ico $s={16} viewBox="0 0 16 16"><circle cx="9.500" cy="6" r="4.500" /><path d="M6.300 9.500L1.500 14.500" /></Ico>
          <SearchInput placeholder="Поиск" aria-label="Поиск" />
        </SearchBox>
        <TitleEnd>
          <SignIn>Вход</SignIn>
          <PlainButton $w={48} aria-label="Свернуть"><Ico $s={11} viewBox="0 0 11 11"><path d="M.5 5.500H10.500" /></Ico></PlainButton>
          <PlainButton $w={48} aria-label="Восстановить"><Ico $s={11} viewBox="0 0 11 11"><rect x=".6" y="2.600" width="7.500" height="7.500" rx="1" /><path d="M3 .6H9A1.400 1.400 0 0 1 10.400 2V8" /></Ico></PlainButton>
          <PlainButton $w={48} aria-label="Закрыть"><Ico $s={11} viewBox="0 0 11 11"><path d="M.5 .5L10.500 10.500M10.500 .5L.5 10.500" /></Ico></PlainButton>
        </TitleEnd>
      </TitleBar>
      <TabBar>
        <TabList>{tabs.map(t => <Tab key={t} $active={t === 'Главная'}>{t}</Tab>)}</TabList>
        <Share>
          <Ico $s={13} viewBox="0 0 13 13"><path d="M5 3H1V12H11V8M3.500 8C4 5 6 4 8.500 4V1.500L12 5L8.500 8.300V6C6.500 6 5 6.500 3.500 8Z" /></Ico>
          Общий доступ
          <Chev />
        </Share>
      </TabBar>
    </>
  );
}

function RibbonBar() {
  return (
    <Ribbon>
      <Group $w={216}>
        <Clip>
          <BigButton $w={74}>
            <Ico $s={30} viewBox="0 0 30 30"><path stroke="#e08a1e" fill="#fbe3bf" d="M3 5H23V27H3Z" /><path fill="#fff" stroke="none" d="M6 8H20V24H6Z" /><path fill="#fff" d="M8 6.500V4H10.500A2.500 2.500 0 0 1 15.500 4H18V6.500ZM15 12H28V29H15Z" /></Ico>
            Вставить
            <Chev />
          </BigButton>
          <Stack>
            <LineButton $dim><Ico $s={16} viewBox="0 0 17 17"><path d="M5 1L11.500 12M12 1L5.500 12" /><circle cx="4.500" cy="13.500" r="2" /><circle cx="12.500" cy="13.500" r="2" /></Ico>Вырезать</LineButton>
            <LineButton $dim><Ico $s={16} viewBox="0 0 17 17"><path fill="#eee" d="M1.500 1.500H8V4M1.500 1.500V13H6M6.500 4.500H12L15.500 8V16H6.500ZM12 4.500V8H15.500" /></Ico>Копировать</LineButton>
            <LineButton><Ico $s={16} viewBox="0 0 17 17"><path fill="#f7c27d" stroke="#dd7a1a" d="M1.500 9L7 5.500L12 11.500L7 16Z" /><path fill="#fff" d="M6 5L8.500 3.500L10.500 5.500L14 1.500L16 3.500L12.500 7.500L14 9.500L12 11.500Z" /></Ico>Формат по образцу</LineButton>
          </Stack>
        </Clip>
        <GroupFoot><GroupName>Буфер обмена</GroupName><Launcher /></GroupFoot>
      </Group>

      <Group $w={312}>
        <Rows>
          <ToolRow>
            <Picker $w={113}><select aria-label="Шрифт" defaultValue="t"><option value="t">Times New Roman</option></select><Chev /></Picker>
            <Picker $w={54}><select aria-label="Размер" defaultValue="12"><option>12</option></select><Chev /></Picker>
            <PlainButton $w={28}><Glyph $size={17}>A</Glyph><Ico $raised $s={7} viewBox="0 0 8 8"><path className="b" d="M1 5L4 2L7 5" /></Ico></PlainButton>
            <PlainButton $w={26}><Glyph>A</Glyph><Ico $raised $s={7} viewBox="0 0 8 8"><path className="b" d="M1 2L4 5L7 2" /></Ico></PlainButton>
            <Rule />
            <PlainButton $w={24}><Glyph $size={14}>Aa</Glyph></PlainButton><Drop w={18} />
            <Rule />
            <PlainButton $w={30} aria-label="Очистить формат"><Glyph $size={16}>A</Glyph><Ico $s={9} viewBox="0 0 9 9"><path stroke="#a33bb0" fill="#f3d9f6" d="M1 5.500L5 1L8 4L4 8.500Z" /></Ico></PlainButton>
          </ToolRow>
          <ToolRow>
            <PlainButton $w={24} $on><Glyph $bold>Ж</Glyph></PlainButton>
            <PlainButton $w={26}><Glyph $italic $size={14}>К</Glyph></PlainButton>
            <PlainButton $w={26}><Glyph $line="underline" $size={14}>Ч</Glyph></PlainButton><Drop w={12} />
            <PlainButton $w={30}><Glyph $line="line-through" $size={12}>ab</Glyph></PlainButton>
            <PlainButton $w={28}><Glyph $bold $size={13}>x<small><sub>2</sub></small></Glyph></PlainButton>
            <PlainButton $w={25}><Glyph $bold $size={13}>x<small><sup>2</sup></small></Glyph></PlainButton>
            <Rule />
            <PlainButton $w={28} $dim><Glyph $bold $size={16}>A</Glyph></PlainButton><Drop w={12} dim />
            <PlainButton $w={30} aria-label="Цвет выделения"><Ico viewBox="0 0 18 18"><path d="M6 11L4 8L13 1.500L15 3.500L8.500 11ZM5 9L2.500 12H5.500" /><path stroke="#ff0" strokeWidth="4" d="M1 16H17" /></Ico></PlainButton><Drop w={12} />
            <PlainButton $w={30}><Glyph $bar="#e11" $size={14}>A</Glyph></PlainButton><Drop w={10} />
          </ToolRow>
        </Rows>
        <GroupFoot><GroupName>Шрифт</GroupName><Launcher /></GroupFoot>
      </Group>

      <Group $w={251}>
        <Rows>
          <ToolRow>
            <PlainButton $w={24} aria-label="Маркеры"><Ico viewBox="0 0 18 18"><path d="M6 3H17M6 9H17M6 15H17" /><path className="b" strokeWidth="3" d="M1 3H4M1 9H4M1 15H4" /></Ico></PlainButton><Drop w={16} />
            <PlainButton $w={28} aria-label="Нумерация"><Ico viewBox="0 0 18 18"><path d="M6 3H17M6 9H17M6 15H17" /><path className="b" strokeWidth="1" d="M1 1.500H2.500V5M1 7H3V9H1V11H3.500M1 13H3V17H1M1 15H3" /></Ico></PlainButton><Drop w={14} />
            <PlainButton $w={26} aria-label="Многоуровневый список"><Ico viewBox="0 0 18 18"><path d="M4 3H17M8 9H17M12 15H17" /><path className="b" strokeWidth="1" d="M0 1.500H1.500V5M4 7.500H6V11H4V9H6M9.500 12.500V13.500M9.500 14.500V17.500" /></Ico></PlainButton><Drop w={12} />
            <Rule $m={4} />
            <PlainButton $w={24} aria-label="Уменьшить отступ"><Ico viewBox="0 0 18 18"><path d="M2 3H17M10 7H17M10 11H17M2 15H17" /><path className="b" strokeWidth="1.500" d="M8 9H1.500M4 6.500L1.500 9L4 11.500" /></Ico></PlainButton>
            <PlainButton $w={26} aria-label="Увеличить отступ"><Ico viewBox="0 0 18 18"><path d="M2 3H17M10 7H17M10 11H17M2 15H17" /><path className="b" strokeWidth="1.500" d="M1 9H7.500M5 6.500L7.500 9L5 11.500" /></Ico></PlainButton>
            <Rule $m={1} />
            <PlainButton $w={26} aria-label="Сортировка"><SortText><b>А</b><span>Я</span></SortText><Ico $s={17} viewBox="0 0 16 16" width="9"><path d="M7 0V15M3.500 11.500L7 15L10.500 11.500" /></Ico></PlainButton>
            <Rule $m={1} />
            <PlainButton $w={26}><Glyph $size={16}>¶</Glyph></PlainButton>
          </ToolRow>
          <ToolRow>
            <PlainButton $w={24} aria-label="По левому краю"><Lines xs={[[2, 16], [2, 11], [2, 16], [2, 11]]} /></PlainButton>
            <PlainButton $w={29} aria-label="По центру"><Lines xs={[[2, 16], [5, 13], [2, 16], [5, 13]]} /></PlainButton>
            <PlainButton $w={24} $on aria-label="По правому краю"><Lines xs={[[2, 16], [7, 16], [2, 16], [7, 16]]} /></PlainButton>
            <PlainButton $w={28} aria-label="По ширине"><Lines xs={[[2, 16], [2, 16], [2, 16], [2, 16]]} /></PlainButton>
            <Rule />
            <PlainButton $w={28} aria-label="Интервал"><Ico viewBox="0 0 18 18"><path d="M8 3H17M8 7H17M8 11H17M8 15H17" /><path className="b" d="M4 1V7M2 3.500L4 1L6 3.500M4 11V17M2 14.500L4 17L6 14.500" /></Ico></PlainButton><Drop w={12} />
            <Rule $m={2} />
            <PlainButton $w={28} aria-label="Заливка"><Ico viewBox="0 0 18 18"><path d="M3 8L9 2L14 8L8.500 13ZM9 2V.5" /><path className="b" d="M14.500 6Q17 10 16 12" strokeWidth="2" /><path d="M1 14.500H17V17H1Z" strokeWidth=".8" /></Ico></PlainButton><Drop w={12} />
            <PlainButton $w={28} aria-label="Границы"><Ico viewBox="0 0 18 18"><path strokeDasharray="1 1.500" d="M1.500 1.500H16.500V16M1.500 1.500V16M9 2V16M2 9H16" /><path d="M1 16.500H17" strokeWidth="1.800" /></Ico></PlainButton><Drop w={12} />
          </ToolRow>
        </Rows>
        <GroupFoot><GroupName>Абзац</GroupName><Launcher /></GroupFoot>
      </Group>

      <Group>
        <Gallery>
          <StyleItem $size={14} $italic>Выделение</StyleItem>
          <StyleItem $size={41}>Загол</StyleItem>
          <StyleItem $size={19}>Заголовок 1</StyleItem>
          <StyleItem $size={13} $bold>Заголовок 2</StyleItem>
          <StyleItem $size={18} $sans $bold>Заголовок 3</StyleItem>
          <StyleItem $size={20} $bold>Заголовок</StyleItem>
          <StyleItem $size={17} $bold $italic>Заголовок 5</StyleItem>
          <GalleryMore aria-label="Ещё стили"><Ico $s={9} viewBox="0 0 9 9"><path d="M1 1.500H8M1.500 4.500L4.500 7.500L7.500 4.500" /></Ico></GalleryMore>
        </Gallery>
        <GroupFoot><GroupName>Стили</GroupName><Launcher /></GroupFoot>
      </Group>

      <Group $w={113}>
        <EditList>
          <LineButton><Ico viewBox="0 0 18 18"><circle cx="11" cy="6.500" r="5" /><path d="M7.500 10.500L1.500 16.500" /></Ico>Найти<Drop w={34} /></LineButton>
          <LineButton><Ico viewBox="0 0 18 18"><path stroke="#a33bb0" d="M8 1V8M8 5.500A2 2 0 1 1 8 7" /><path className="b" d="M16 12A2.500 2.500 0 1 0 16 16M3 6C0 10 3 13 7 13M5 10.500L7.500 13L5 15.500" /></Ico>Заменить</LineButton>
          <LineButton><Ico viewBox="0 0 18 18"><path d="M4 1V14L7.500 11L9.500 16L12 15L10 10H14Z" /></Ico>Выделить<Chev /></LineButton>
        </EditList>
        <GroupFoot><GroupName>Редактирование</GroupName></GroupFoot>
      </Group>
      <Group $w={84}>
        <BigButton $w={83}>
          <Ico $s={30} viewBox="0 0 32 32" color="#4a80dc"><path strokeWidth="1.500" d="M16 29H8A3 3 0 0 1 5 26V5A3 3 0 0 1 8 2H17L24 9V13M9 19C13 17 14 12 13.500 8C14 13 17 15 20 15C16 15 12 17 9 19ZM17 24L21 20A3 3 0 0 1 25 24M28 20L24 24M20 27A3 3 0 0 0 24 29L28 25A3 3 0 0 0 26 20M18 23A3 3 0 0 0 20 28" /></Ico>
          <span>Создать<br />PDF</span>
        </BigButton>
        <GroupFoot><GroupName>Adobe Acrobat</GroupName></GroupFoot>
      </Group>
      <Group $w={87}>
        <BigButton $w={86}>
          <Ico $s={30} viewBox="0 0 32 32" color="#c2572b"><path strokeWidth="1.600" d="M2 2H30V30H2ZM6 6H14V14H6ZM18 6H26V14H18ZM6 18H14V26H6ZM18 18H26V26H18Z" /></Ico>
          Надстройки
        </BigButton>
        <GroupFoot><GroupName>Надстройки</GroupName></GroupFoot>
      </Group>
      <CollapseSlot><PlainButton $w={24} aria-label="Свернуть ленту"><Chev s={11} /></PlainButton></CollapseSlot>
    </Ribbon>
  );
}

export default function App() {
  return (
    <Shell>
      <GlobalStyle />
      <Header />
      <RibbonBar />
      <RulerBar>
        <TabStop><Ico $s={8} viewBox="0 0 8 8"><path strokeWidth="2" stroke="#555" d="M2 1V6.500H7" /></Ico></TabStop>
        <Ruler>
          <RulerEnd $w={38}>
            <svg width="38" height="20" fill="none" stroke="#888"><path fill="#fff" stroke="none" d="M19 0H38V12H19Z" /><path d="M1.500 4V9M10.500 4V9M29.500 4V9" /><path fill="#fff" d="M13.500 -1V2L24.500 10.500V13H13.500V10.500L24.500 2V-1ZM13.500 14.500H24.500V19H13.500Z" /></svg>
          </RulerEnd>
          <RulerScale>
            {Array.from({ length: 13 }, (_, i) => <RulerMark key={i}>{(i + 1) * 2}</RulerMark>)}
          </RulerScale>
          <RulerEnd $w={34}>
            <svg width="34" height="20" fill="none" stroke="#888"><path fill="#fff" stroke="none" d="M0 0H13V12H0Z" /><path d="M9.500 4V9M19.500 4V9M28.500 4V9" /><path fill="#fff" d="M8.500 12L14.500 6L19.500 12V15.500H8.500Z" /></svg>
          </RulerEnd>
        </Ruler>
      </RulerBar>

      <Workspace>
        <VRuler />
        <Canvas>
          <SketchCard cut="top" no="2014000003" page="020"><SketchBore /></SketchCard>
          <OperationCard cut="top" no="6014000004" page="025" name="Радиально-сверлильная" machine="2М55" t0="0,61" tp="24"
            steps={[
              '1. Установить заготовку в приспособление, закрепить.',
              'ПР: Кондуктор сверлильный, специальный',
              '2. Сверлить отверстия, выдерживая размеры 1,2.',
              'РИ: сверло спиральное Ø6,5 Р6М5 ГОСТ 10902-73;  СИ: Штангенциркуль ШЦ-I-150-0,05 ГОСТ 166-89, калибр для межцентрового контроля положения отверстий',
              '', '3. Зенковать фаски, выдерживая размер 3.',
              <>РИ: зенковка коническая Р6М5 ГОСТ 14953-80;  СИ: шаблон <Flag>фасонный</Flag>, накладной</>,
              '', '', '4. Открепить заготовку и уложить в тару.',
            ]}
            m1={['6,5', '22', '3,25', '8', '0,3', '1600', '32,7']} m2={['7,0', '3', '0,5', '0,5', '0,1', '1000', '22']} />
          <SketchCard cut="top" no="2014000004" page="025"><SketchHoles /></SketchCard>

          <OperationCard no="6014000005" page="035" name="Фрезерная с ЧПУ" machine="6Т13-Ф3" t0="2,18" tp="64"
            steps={[
              '1. Установить заготовку в приспособление, закрепить.',
              'ПР: Приспособление специальное фрезерное.',
              '2. Фрезеровать поверхности заготовки по программе, выдерживая размеры 1..6.',
              <>РИ: фреза концевая Ø10 Р6М5 ГОСТ Р 53002-<Flag $c="#2a5fb4">2008;  СИ</Flag>: Штангенциркуль ШЦ-I-150-0,05 ГОСТ 166-89, калибр <Flag>канавочный.</Flag></>,
              '', '3. Фрезеровать паз, выдерживая размеры 6..10.',
              <>РИ: фреза концевая Ø6 Р6М5 ГОСТ Р 53002-<Flag $c="#2a5fb4">2008;  СИ</Flag>: Штангенциркуль ШЦ-I-150-0,05 ГОСТ 166-89, калибр <Flag>канавочный.</Flag></>,
              '', '', '4. Открепить заготовку и уложить в тару.',
            ]}
            m1={['10', '430', '10', '2', '0,2', '2000', '62,8']} m2={['6', '10', '4', '1', '0,2', '2000', '37,68']} />
          <SketchCard no="2014000005" page="035"><SketchSlot /></SketchCard>
          <OperationCard no="6014000006" page="045" name="Токарная" machine="16К20" t0="0,27" tp="20"
            steps={[
              '1. Установить заготовку в приспособление, закрепить.',
              <>ПР: <Flag>Патрон трехкулачковый</Flag> ГОСТ 2675-80.</>,
              '2. Точить поверхность тонко, выдерживая размеры 1,2.',
              <>РИ: резец проходной упорный ВК6 ГОСТ 18879-<Flag $c="#2a5fb4">73;  СИ</Flag>: Штангенциркуль ШЦ-I-125-0,01 ГОСТ 166-89, калибр-скоба Ø80д6 ГОСТ 18360-93.</>,
              '', '3. Точить фаску, выдерживая размер 3.',
              <>РИ: резец <Flag>фасонный</Flag> Р6М5 ГОСТ 18875-73;  СИ: Штангенциркуль ШЦ-I-150-0,05 ГОСТ 166-89, калибр <Flag>канавочный.</Flag></>,
              '', '', '4. Открепить заготовку и уложить в тару.',
            ]}
            m1={['80,2', '20', '0,1', '1', '0,05', '1600', '402']} m2={['80', '2', '0,5', '1', '0,1', '1000', '251']} />

          <SketchCard cut="bottom" />
          <OperationCard cut="bottom" no="6014000007" />
          <SketchCard cut="bottom" />
        </Canvas>
        <ScrollBar>
          <Ico $s={10} viewBox="0 0 10 10"><path fill="#666" stroke="none" d="M5 1L9.500 8H.5Z" /></Ico>
          <ScrollTrack><ScrollThumb /></ScrollTrack>
          <Ico $s={10} viewBox="0 0 10 10"><path fill="#666" stroke="none" d="M5 9L9.500 2H.5Z" /></Ico>
        </ScrollBar>
      </Workspace>

      <StatusBar>
        <StatusSide $gap={20}>
          <span>Страница 1 из 26</span>
          <span>Число слов: 2432</span>
          <Ico $s={14} viewBox="0 0 14 14"><path d="M6.500 13H1V1H5.500L6.500 2L7.500 1H12V6M6.500 2V12M8 8L13 13.500M13 8L8 13.500" /></Ico>
          <span>русский</span>
        </StatusSide>
        <StatusSide $gap={0}>
          <Focus><Ico $s={14} viewBox="0 0 14 14"><path d="M3 1H1V3M11 1H13V3M3 13H1V11M11 13H13V11M4 2.500H8L10.500 5V11.500H4ZM8 2.500V5H10.500" /></Ico>Фокусировка</Focus>
          <ViewButton aria-label="Режим чтения"><Ico $s={14} viewBox="0 0 14 14"><path d="M7 2.500L6 1.500H1V12H6L7 13L8 12H13V1.500H8ZM7 2.500V13M2.500 4H5.500M2.500 6.500H5.500M2.500 9H5.500M8.500 4H11.500M8.500 6.500H11.500M8.500 9H11.500" /></Ico></ViewButton>
          <ViewButton $on aria-label="Разметка страницы"><Ico $s={14} viewBox="0 0 14 14"><path d="M1.500 .6H12.500V13.400H1.500ZM3.500 3.500H10.500M3.500 5.500H10.500M3.500 7.500H10.500M3.500 9.500H10.500M3.500 11.500H10.500" /></Ico></ViewButton>
          <ViewButton aria-label="Веб-документ"><Ico $s={14} viewBox="0 0 14 14"><path d="M5 13H1.500V.6H12V5M3.500 3H10M3.500 5.500H7M3.500 8H5.500" /><circle cx="9.500" cy="9.500" r="3.800" /><path d="M6 9.500H13M9.500 6V13" /></Ico></ViewButton>
          <PlainButton $w={18} aria-label="Уменьшить"><Ico $s={9} viewBox="0 0 9 9"><path d="M.5 4.500H8.500" /></Ico></PlainButton>
          <Zoom type="range" min={0} max={100} defaultValue={24} aria-label="Масштаб" />
          <PlainButton $w={20} aria-label="Увеличить"><Ico $s={9} viewBox="0 0 9 9"><path d="M.5 4.500H8.500M4.500 .5V8.500" /></Ico></PlainButton>
          <ZoomValue>50 %</ZoomValue>
        </StatusSide>
      </StatusBar>
      <TaskBar>
        <TaskGroup><Task $gap /><Task /><Task /><Task $on /></TaskGroup>
        <Clock>9:21</Clock>
      </TaskBar>
    </Shell>
  );
}
